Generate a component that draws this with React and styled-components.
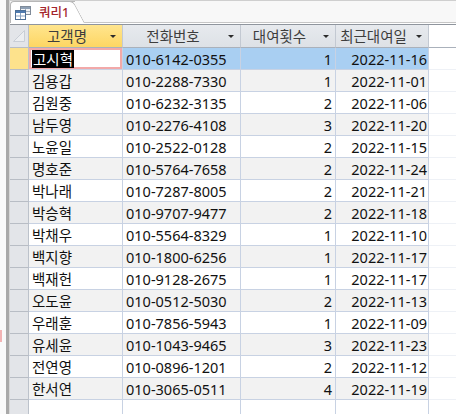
import React from "react";
import styled, { createGlobalStyle, css } from "styled-components";

const rows = [
    ["고시혁", "010-6142-0355", 1, "2022-11-16"],
    ["김용갑", "010-2288-7330", 1, "2022-11-01"],
    ["김원중", "010-6232-3135", 2, "2022-11-06"],
    ["남두영", "010-2276-4108", 3, "2022-11-20"],
    ["노윤일", "010-2522-0128", 2, "2022-11-15"],
    ["명호준", "010-5764-7658", 2, "2022-11-24"],
    ["박나래", "010-7287-8005", 2, "2022-11-21"],
    ["박승혁", "010-9707-9477", 2, "2022-11-18"],
    ["박채우", "010-5564-8329", 1, "2022-11-10"],
    ["백지향", "010-1800-6256", 1, "2022-11-17"],
    ["백재헌", "010-9128-2675", 1, "2022-11-17"],
    ["오도윤", "010-0512-5030", 2, "2022-11-13"],
    ["우래훈", "010-7856-5943", 1, "2022-11-09"],
    ["유세윤", "010-1043-9465", 3, "2022-11-23"],
    ["전연영", "010-0896-1201", 2, "2022-11-12"],
    ["한서연", "010-3065-0511", 4, "2022-11-19"],
];

const headers = ["고객명", "전화번호", "대여횟수", "최근대여일"];

const GlobalStyle = createGlobalStyle`
    html, body {
        margin: 0;
        padding: 0;
        overflow: hidden;
        background: #fff;
    }
    body {
        font-family: "Noto Sans", "Noto Sans CJK KR", sans-serif;
    }
`;

const COLS = "19px 94px 118px 95px 93px 1fr";

const Window = styled.div`
    display: flex;
    width: 456px;
    height: 414px;
    overflow: hidden;
`;

const Gutter = styled.div`
    position: relative;
    width: 6px;
    flex: none;
    background: #fafafa;
    border-right: 3px solid #a9a9a9;
    box-shadow: 1px 0 0 #d6d6d6;
`;

const PinkMark = styled.div`
    position: absolute;
    left: 0;
    top: 330px;
    width: 2px;
    height: 12px;
    background: #f3b4b4;
`;

const Main = styled.div`
    flex: 1;
    display: flex;
    flex-direction: column;
    min-width: 0;
    margin-left: 1px;
`;

const Ribbon = styled.div`
    display: flex;
    height: 8px;
    background: #f1f1f1;
    border-bottom: 1px solid #cfcfcf;
    overflow: hidden;
`;

const RibbonGroup = styled.div`
    width: ${(p) => p.$w || "auto"};
    flex: ${(p) => (p.$w ? "none" : 1)};
    border-right: 1px solid #d3d3d3;
    text-align: center;
    font-size: 12px;
    line-height: 14px;
    color: #6a6a6a;
    margin-top: -7px;
    height: 15px;
`;

const TabStrip = styled.div`
    display: flex;
    align-items: flex-end;
    height: 22px;
    background: #f8f8f8;
    border-bottom: 1px solid #c6c6c6;
`;

const Tab = styled.div`
    position: relative;
    display: flex;
    align-items: center;
    gap: 8px;
    width: 60px;
    height: 21px;
    margin-bottom: -1px;
    padding-left: 4px;
    background: #fff;
    border: 1px solid #b7b7b7;
    border-right: none;
    border-bottom: none;
    border-top-left-radius: 4px;
    &::after {
        content: "";
        position: absolute;
        top: -1px;
        right: -10px;
        width: 14px;
        height: 21px;
        background: #fff;
        border-top: 1px solid #b7b7b7;
        border-right: 1px solid #b7b7b7;
        border-top-right-radius: 4px;
        transform: skewX(28deg);
        transform-origin: bottom left;
    }
`;

const TabLabel = styled.span`
    position: relative;
    z-index: 1;
    font-size: 12.5px;
    line-height: 16px;
    color: #a4262c;
    font-weight: 500;
`;

const Sheet = styled.div`
    margin-top: 1px;
    border-top: 1px solid #8f959d;
`;

const Row = styled.div`
    display: grid;
    grid-template-columns: ${COLS};
    height: ${(p) => (p.$head ? "23px" : "22px")};
    background: ${(p) => (p.$alt ? "#f2f2f2" : "#fff")};
`;

const Selector = styled.div`
    box-sizing: border-box;
    background: ${(p) => (p.$active ? "#fde28c" : "#e3e5e9")};
    border-right: 1px solid #bcc2cb;
    border-bottom: 1px solid #b8bdc5;
    display: flex;
    align-items: center;
    justify-content: center;
`;

const HeadCell = styled.div`
    box-sizing: border-box;
    display: flex;
    align-items: center;
    background: ${(p) => (p.$active ? "linear-gradient(#ffe58e, #fdd663)" : "linear-gradient(#e7eaee, #dde1e6)")};
    border-right: 1px solid #c3c9d2;
    border-bottom: 1px solid #aab1bb;
    font-size: 14.5px;
    color: #3d3d3d;
`;

const HeadLabel = styled.span`
    flex: 1;
    text-align: center;
    white-space: nowrap;
    line-height: 20px;
`;

const Arrow = styled.span`
    flex: none;
    width: 0;
    height: 0;
    margin: 1px 6px 0 5px;
    border-left: 3px solid transparent;
    border-right: 3px solid transparent;
    border-top: 3px solid #2b2b2b;
`;

const Filler = styled.div`
    background: #fff;
    border-bottom: 1px solid ${(p) => (p.$head ? "#aab1bb" : "#eef1f6")};
`;

const Cell = styled.div`
    box-sizing: border-box;
    display: flex;
    align-items: center;
    justify-content: ${(p) => (p.$right ? "flex-end" : "flex-start")};
    padding: ${(p) => (p.$right ? "0 3px 0 0" : "0 0 0 3px")};
    border-right: 1px solid #c8d2e3;
    border-bottom: 1px solid #c8d2e3;
    font-size: 14.5px;
    line-height: 20px;
    color: #111;
    white-space: nowrap;
    overflow: hidden;
    ${(p) =>
        p.$sel &&
        css`
            background: #a9cff2;
        `}
    ${(p) =>
        p.$focus &&
        css`
            background: #fff;
            box-shadow: inset 0 0 0 2px #f2a9a9;
        `}
`;

const Picked = styled.span`
    display: inline-block;
    background: #000;
    color: #fff;
    line-height: 18px;
    padding: 0 1px 0 1px;
`;

const DateCell = styled(Cell)`
    padding-right: 1px;
`;

const QueryIcon = () => (
    <svg width="16" height="14" viewBox="0 0 16 14" style={{ position: "relative", zIndex: 1, flex: "none" }}>
        <rect x="5.5" y="0.5" width="10" height="8" fill="#f2f4f7" stroke="#7f8b99" />
        <rect x="6" y="1" width="9" height="2" fill="#8ea0b5" />
        <line x1="10.5" y1="3" x2="10.5" y2="8" stroke="#a9b3bf" />
        <line x1="6" y1="5.5" x2="15" y2="5.5" stroke="#a9b3bf" />
        <rect x="0.5" y="4.5" width="10" height="9" fill="#fff" stroke="#4d6f96" />
        <rect x="1" y="5" width="9" height="2" fill="#4f7bb0" />
        <line x1="5.5" y1="7" x2="5.5" y2="13" stroke="#8aa3c2" />
        <line x1="1" y1="10" x2="10" y2="10" stroke="#8aa3c2" />
    </svg>
);

const Corner = () => (
    <svg width="12" height="12" viewBox="0 0 12 12">
        <polygon points="0.5,11.5 11.5,0.5 11.5,11.5" fill="#eceef1" stroke="#c9ced6" />
    </svg>
);

export default function App() {
    return (
        <>
            <GlobalStyle />
            <Window>
                <Gutter>
                    <PinkMark />
                </Gutter>
                <Main>
                    <Ribbon>
                        <RibbonGroup $w="62px" />
                        <RibbonGroup $w="253px">레코드</RibbonGroup>
                        <RibbonGroup $w="115px">찾기</RibbonGroup>
                        <RibbonGroup />
                    </Ribbon>
                    <TabStrip>
                        <Tab>
                            <QueryIcon />
                            <TabLabel>쿼리1</TabLabel>
                        </Tab>
                    </TabStrip>
                    <Sheet>
                        <Row $head>
                            <Selector>
                                <Corner />
                            </Selector>
                            {headers.map((h, i) => (
                                <HeadCell key={h} $active={i === 0}>
                                    <HeadLabel>{h}</HeadLabel>
                                    <Arrow />
                                </HeadCell>
                            ))}
                            <Filler $head />
                        </Row>
                        {rows.map((r, i) => {
                            const sel = i === 0;
                            return (
                                <Row key={r[0]} $alt={i % 2 === 1}>
                                    <Selector $active={sel} />
                                    <Cell $focus={sel}>{sel ? <Picked>{r[0]}</Picked> : r[0]}</Cell>
                                    <Cell $sel={sel}>{r[1]}</Cell>
                                    <Cell $sel={sel} $right>
                                        {r[2]}
                                    </Cell>
                                    <DateCell $sel={sel} $right>
                                        {r[3]}
                                    </DateCell>
                                    <Filler />
                                </Row>
                            );
                        })}
                        <Row>
                            <Selector />
                            <Cell />
                            <Cell />
                            <Cell />
                            <Cell />
                            <Filler />
                        </Row>
                    </Sheet>
                </Main>
            </Window>
        </>
    );
}
